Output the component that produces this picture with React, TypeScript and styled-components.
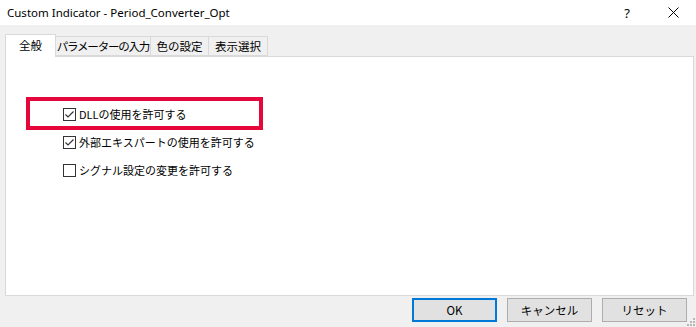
import React from 'react';
import styled, { createGlobalStyle } from 'styled-components';

const GlobalStyle = createGlobalStyle`
  html, body {
    margin: 0;
    padding: 0;
    background: #f0f0f0;
  }
  body {
    font-family: "Noto Sans CJK JP", "Noto Sans", sans-serif;
    font-size: 11px;
    color: #000;
  }
`;

const Window = styled.div`
  width: 696px;
  height: 327px;
  background: #f0f0f0;
  display: flex;
  flex-direction: column;
  position: relative;
  overflow: hidden;
`;

const TitleBar = styled.div`
  height: 25px;
  background: #ffffff;
  display: flex;
  align-items: center;
  padding-left: 7px;
  font-family: "Noto Sans", "Open Sans", sans-serif;
  font-size: 11.5px;
  color: #000;
`;

const Title = styled.div`
  flex: 1;
`;

const TitleButton = styled.div<{ $w: number }>`
  width: ${({ $w }) => $w}px;
  height: 25px;
  display: flex;
  align-items: center;
  justify-content: center;
  font-family: "Noto Sans", sans-serif;
  font-size: 13px;
`;

const Body = styled.div`
  flex: 1;
  display: flex;
  flex-direction: column;
  padding: 9px 3px 0 5px;
`;

const TabStrip = styled.div`
  display: flex;
  align-items: flex-end;
  height: 22px;
  position: relative;
  z-index: 1;
`;

const Tab = styled.div<{ $w: number; $active?: boolean; $spacing?: number }>`
  width: ${({ $w }) => $w}px;
  height: ${({ $active }) => ($active ? 23 : 20)}px;
  box-sizing: border-box;
  border: 1px solid #d9d9d9;
  border-bottom: ${({ $active }) => ($active ? 'none' : '1px solid #d9d9d9')};
  margin-left: ${({ $active }) => ($active ? 0 : -1)}px;
  margin-bottom: ${({ $active }) => ($active ? -1 : 0)}px;
  background: ${({ $active }) => ($active ? '#ffffff' : '#f0f0f0')};
  display: flex;
  align-items: center;
  justify-content: center;
  padding-bottom: ${({ $active }) => ($active ? 3 : 0)}px;
  font-size: 11.5px;
  letter-spacing: ${({ $spacing }) => $spacing ?? 0}px;
  white-space: nowrap;
  &:first-child {
    margin-left: 0;
  }
`;

const Panel = styled.div`
  width: 689px;
  height: 240px;
  box-sizing: border-box;
  background: #ffffff;
  border: 1px solid #d9d9d9;
  padding: 43px 0 0 57px;
  display: flex;
  flex-direction: column;
`;

const OptionRow = styled.div<{ $highlight?: boolean }>`
  height: 28px;
  display: flex;
  align-items: center;
  position: relative;
  font-size: 11px;

  ${({ $highlight }) =>
    $highlight &&
    `
    &::before {
      content: '';
      position: absolute;
      left: -37px;
      top: -3px;
      width: 237px;
      height: 33px;
      box-sizing: border-box;
      border: 4px solid #e5073b;
      pointer-events: none;
    }
  `}
`;

const Box = styled.span`
  width: 13px;
  height: 13px;
  box-sizing: border-box;
  border: 1px solid #333333;
  background: #ffffff;
  display: inline-flex;
  align-items: center;
  justify-content: center;
  margin-right: 3px;
`;

const Footer = styled.div`
  display: flex;
  justify-content: flex-end;
  gap: 10px;
  padding: 2px 6px 0 0;
`;

const Button = styled.button<{ $default?: boolean }>`
  width: 85px;
  height: 24px;
  box-sizing: border-box;
  background: #e1e1e1;
  border: ${({ $default }) => ($default ? '2px solid #0078d7' : '1px solid #adadad')};
  font-family: "Noto Sans CJK JP", "Noto Sans", sans-serif;
  font-size: 11.5px;
  color: #000;
  padding: 0;
  display: flex;
  align-items: center;
  justify-content: center;
`;

const Grip = styled.svg`
  position: absolute;
  right: 1px;
  bottom: 1px;
`;

const Check: React.FC<{ checked: boolean }> = ({ checked }) => (
  <Box>
    {checked && (
      <svg width="11" height="11" viewBox="0 0 11 11">
        <path d="M1.5 5.5 L4 8 L9.5 2.5" fill="none" stroke="#333" strokeWidth="1.2" />
      </svg>
    )}
  </Box>
);

const tabs = [
  { label: '全般', w: 51, active: true },
  { label: 'パラメーターの入力', w: 96, spacing: -1.2 },
  { label: '色の設定', w: 59 },
  { label: '表示選択', w: 60 },
];

const options = [
  { label: 'DLLの使用を許可する', checked: true, highlight: true },
  { label: '外部エキスパートの使用を許可する', checked: true },
  { label: 'シグナル設定の変更を許可する', checked: false },
];

export default function App() {
  return (
    <Window>
      <GlobalStyle />
      <TitleBar>
        <Title>Custom Indicator - Period_Converter_Opt</Title>
        <TitleButton $w={46}>?</TitleButton>
        <TitleButton $w={46}>
          <svg width="11" height="11" viewBox="0 0 11 11">
            <path d="M0.5 0.5 L10.5 10.5 M10.5 0.5 L0.5 10.5" stroke="#000" strokeWidth="1" />
          </svg>
        </TitleButton>
      </TitleBar>
      <Body>
        <TabStrip>
          {tabs.map(t => (
            <Tab key={t.label} $w={t.w} $active={t.active} $spacing={t.spacing}>
              {t.label}
            </Tab>
          ))}
        </TabStrip>
        <Panel>
          {options.map(o => (
            <OptionRow key={o.label} $highlight={o.highlight}>
              <Check checked={o.checked} />
              {o.label}
            </OptionRow>
          ))}
        </Panel>
        <Footer>
          <Button $default>OK</Button>
          <Button>キャンセル</Button>
          <Button>リセット</Button>
        </Footer>
      </Body>
      <Grip width="8" height="8" viewBox="0 0 8 8">
        <rect x="6" y="0" width="2" height="2" fill="#b8b8b8" />
        <rect x="3" y="3" width="2" height="2" fill="#b8b8b8" />
        <rect x="6" y="3" width="2" height="2" fill="#b8b8b8" />
        <rect x="0" y="6" width="2" height="2" fill="#b8b8b8" />
        <rect x="3" y="6" width="2" height="2" fill="#b8b8b8" />
        <rect x="6" y="6" width="2" height="2" fill="#b8b8b8" />
      </Grip>
    </Window>
  );
}
